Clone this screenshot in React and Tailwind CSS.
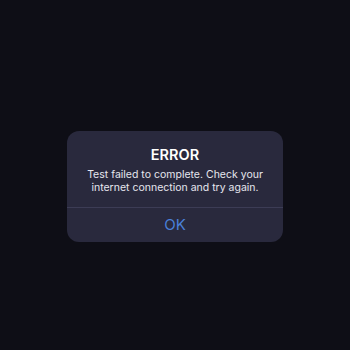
export default function App() {
  return (
    <div className="w-[350px] h-[350px] bg-[#0e0e16] flex items-center justify-center" style={{ fontFamily: 'Inter, "Noto Sans", sans-serif' }}>
      <div className="w-[216px] h-[111px] bg-[#29293d] rounded-[12px] flex flex-col mt-[23px]">
        <div className="flex flex-col items-center pt-[15px] h-[76px]">
          <div className="text-white text-[14.5px] font-semibold leading-[18px]">ERROR</div>
          <div className="text-[#e6e6ee] text-[10.5px] leading-[13px] text-center mt-[4px] px-2">
            Test failed to complete. Check your<br />internet connection and try again.
          </div>
        </div>
        <div className="h-px bg-[#3c3c55]" />
        <div className="flex-1 flex items-center justify-center text-[#4a80d8] text-[15px] pt-[1px]">OK</div>
      </div>
    </div>
  );
}
